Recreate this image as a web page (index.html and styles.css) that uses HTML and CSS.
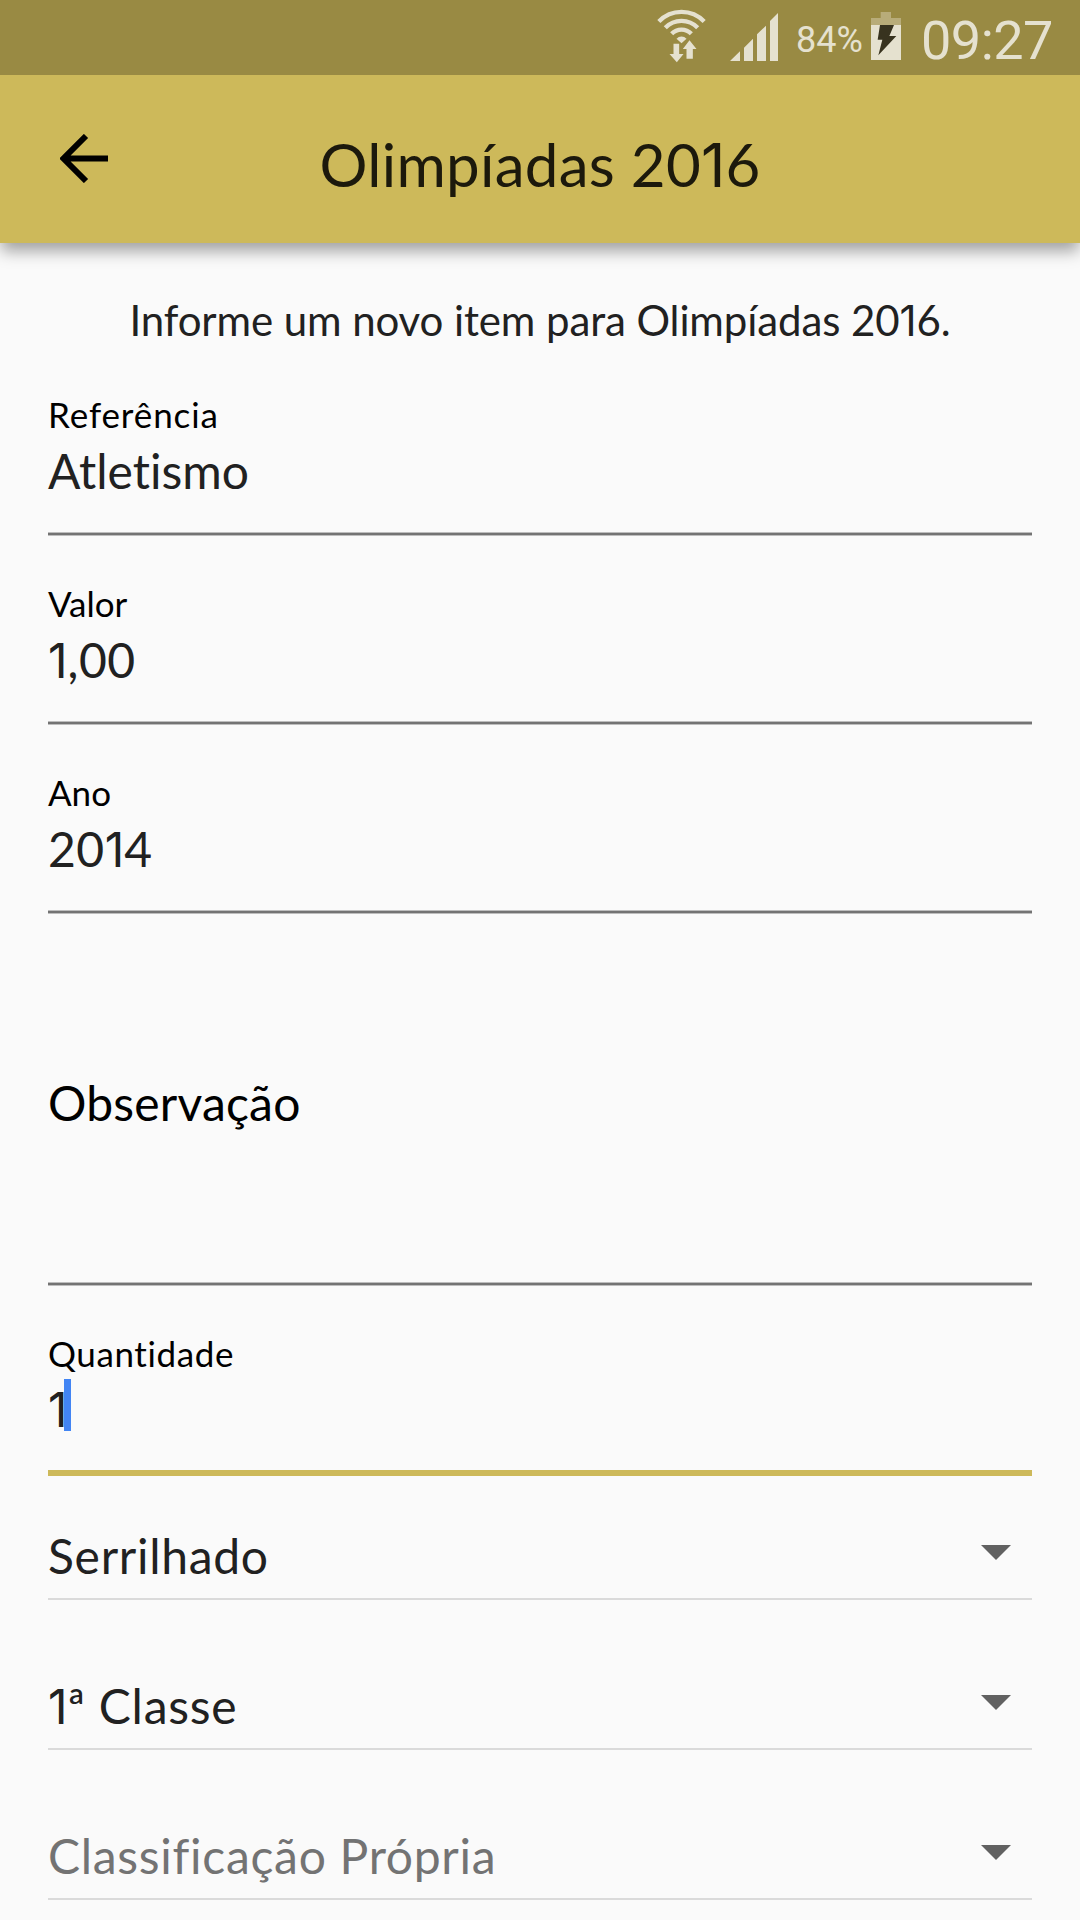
FILE: index.html
```
<!DOCTYPE html>
<html lang="pt-BR">
<head>
    <meta charset="UTF-8">
    <meta name="viewport" content="width=device-width, initial-scale=1.0">
    <title>Olimpíadas 2016</title>

    <link rel="stylesheet" href="styles.css">
</head>
<body>
    <!-- Status bar -->
    <div class="statusBar">
        <svg class="wifi" viewBox="50 25 152 165">
            <g class="arcs">
                <path d="M58 65.4A94.5 94.5 0 0 1 194 65.4"/>
                <path d="M77.4 84.1A67.5 67.5 0 0 1 174.6 84.1"/>
                <path d="M96.5 102.5A41 41 0 0 1 155.5 102.5"/>
            </g>
            <path d="M111 117A21 21 0 0 1 141 117L126 131Z"/>
            <path d="M102 132H119V163H132L112 188L90 163H102Z"/>
            <path class="up" d="M141 177V148H130L150 122L171 148H160V177Z"/>
        </svg>
        <svg class="signal" viewBox="270 39 144 144">
            <path d="M270 183L300 154V183ZM312 183V143L339 116V183ZM351 183V103L378 77V183ZM390 183V63L414 39V183Z"/>
        </svg>
        <span class="percent">84%</span>
        <svg class="battery" viewBox="693 36 90 144">
            <path class="empty" d="M722 36H753V54H783V75H693V54H722Z"/>
            <path d="M693 75H783V180H693Z"/>
            <path class="bolt" d="M720 75H762L748 108H769L715 166L727 119H713Z"/>
        </svg>
        <span class="clock">09:27</span>
    </div>

    <!-- Header -->
    <header class="toolbar">
        <svg class="back" viewBox="0 0 48 49">
            <path d="M26 2L3.5 24.5L26 47M3.5 24.5H48"/>
        </svg>
        <h1>Olimpíadas 20<span class="one">1</span>6</h1>
    </header>

    <!-- Form -->
    <main class="content">
        <p class="intro">Informe um novo item para Olimpíadas 20<span class="one">1</span>6.</p>

        <div class="field">
            <label class="wide">Referência</label>
            <div class="value">Atletismo</div>
        </div>
        <div class="field">
            <label>Valor</label>
            <div class="value number"><span class="one">1</span>,00</div>
        </div>
        <div class="field">
            <label>Ano</label>
            <div class="value number">20<span class="one">1</span>4</div>
        </div>
        <div class="field area">
            <label>Observação</label>
        </div>
        <div class="field focused">
            <label class="quantity">Quantidade</label>
            <div class="value"><span class="one">1</span><span class="caret"></span></div>
        </div>

        <div class="select">
            <span>Serrilhado</span>
            <i class="arrow"></i>
        </div>
        <div class="select">
            <span><span class="one">1</span>ª Classe</span>
            <i class="arrow"></i>
        </div>
        <div class="select placeholder">
            <span>Classificação Própria</span>
            <i class="arrow"></i>
        </div>
    </main>
</body>
</html>
```
FILE: styles.css
```
* {
    box-sizing: border-box;
}

body {
    margin: 0;
    height: 1920px;
    overflow: hidden;
    background-color: #fafafa;
    color: #212121;
    font-family: Lato, "Open Sans", sans-serif;
    font-variant-ligatures: none;
}

/* Status bar */
.statusBar {
    position: relative;
    z-index: 1;
    display: flex;
    justify-content: flex-end;
    height: 75px;
    padding-right: 27px;
    background-color: #998a43;
    color: #e5e1cf;
    font-family: Roboto, sans-serif;
}

.statusBar svg {
    flex: none;
    fill: #e5e1cf;
}

.wifi {
    width: 51px;
    height: 55px;
    margin: 8px 23px 0 0;
}

.wifi .arcs {
    fill: none;
    stroke: #e5e1cf;
    stroke-width: 13;
}

.wifi .up {
    stroke: #998a43;
    stroke-width: 3;
    paint-order: stroke;
}

.signal {
    width: 48px;
    height: 48px;
    margin: 13px 18px 0 0;
}

.percent {
    width: 67px;
    margin-right: 8px;
    font-size: 36px;
    line-height: 80px;
    white-space: nowrap;
}

.battery {
    width: 30px;
    height: 48px;
    margin: 12px 20px 0 0;
}

.statusBar .empty {
    fill: #b8ac79;
}

.statusBar .bolt {
    fill: #38331f;
}

.clock {
    width: 132px;
    font-size: 54px;
    font-weight: 400;
    letter-spacing: -0.5px;
    line-height: 81px;
    white-space: nowrap;
}

/* Header */
.toolbar {
    display: grid;
    grid-template-columns: 108px 1fr 108px;
    height: 168px;
    padding-top: 52px;
    background-color: #cdb95a;
    color: #1c190c;
    box-shadow: 0 9px 15px -1px rgba(0, 0, 0, 0.36);
}

.back {
    width: 48px;
    height: 49px;
    margin: 7px 0 0 60px;
    fill: none;
    stroke: #000;
    stroke-width: 6;
}

.toolbar h1 {
    margin: 0;
    font-size: 60px;
    font-weight: 400;
    letter-spacing: 0.3px;
    line-height: 74px;
    text-align: center;
    white-space: nowrap;
}

/* narrow digit one, without the foot */
.one {
    font-family: Inter, "Open Sans", sans-serif;
    letter-spacing: 0;
    line-height: 1;
}

/* Form */
.content {
    padding: 44px 48px 0;
}

.intro {
    height: 50px;
    margin: 0 0 57px;
    font-size: 42px;
    letter-spacing: -0.1px;
    line-height: 67px;
    text-align: center;
    white-space: nowrap;
}

.field {
    height: 142px;
    margin-bottom: 47px;
    background: linear-gradient(#bdbdbd 1px, #737373 1px, #737373 3px, #bdbdbd 3px) bottom / 100% 4px no-repeat;
}

.field label {
    display: block;
    height: 46px;
    font-size: 35px;
    line-height: 40px;
    color: #000;
    white-space: nowrap;
}

.field .wide {
    letter-spacing: 0.9px;
}

.field .quantity {
    letter-spacing: 0.6px;
}

.value {
    height: 60px;
    font-size: 48px;
    line-height: 62px;
    white-space: nowrap;
}

.number {
    letter-spacing: 0.5px;
}

.area {
    height: 325px;
    padding-top: 111px;
}

.area label {
    height: 60px;
    font-size: 48px;
    letter-spacing: 0.2px;
    line-height: 62px;
}

.focused {
    height: 143px;
    margin-bottom: 40px;
    background: linear-gradient(#cdb95a, #cdb95a) bottom / 100% 6px no-repeat;
}

.focused .value {
    display: flex;
}

.focused .one {
    width: 16px;
    line-height: 62px;
}

.caret {
    width: 7px;
    height: 52px;
    background-color: #4285f4;
}

/* Selects */
.select {
    display: flex;
    justify-content: space-between;
    height: 84px;
    margin-bottom: 66px;
    padding-right: 21px;
    border-bottom: 2px solid #dadada;
    font-size: 48px;
    letter-spacing: 0.7px;
    line-height: 80px;
    white-space: nowrap;
}

.arrow {
    margin-top: 29px;
    height: 0;
    border-left: 15px solid transparent;
    border-right: 15px solid transparent;
    border-top: 15px solid #616161;
}

.placeholder {
    color: #737373;
}
```
